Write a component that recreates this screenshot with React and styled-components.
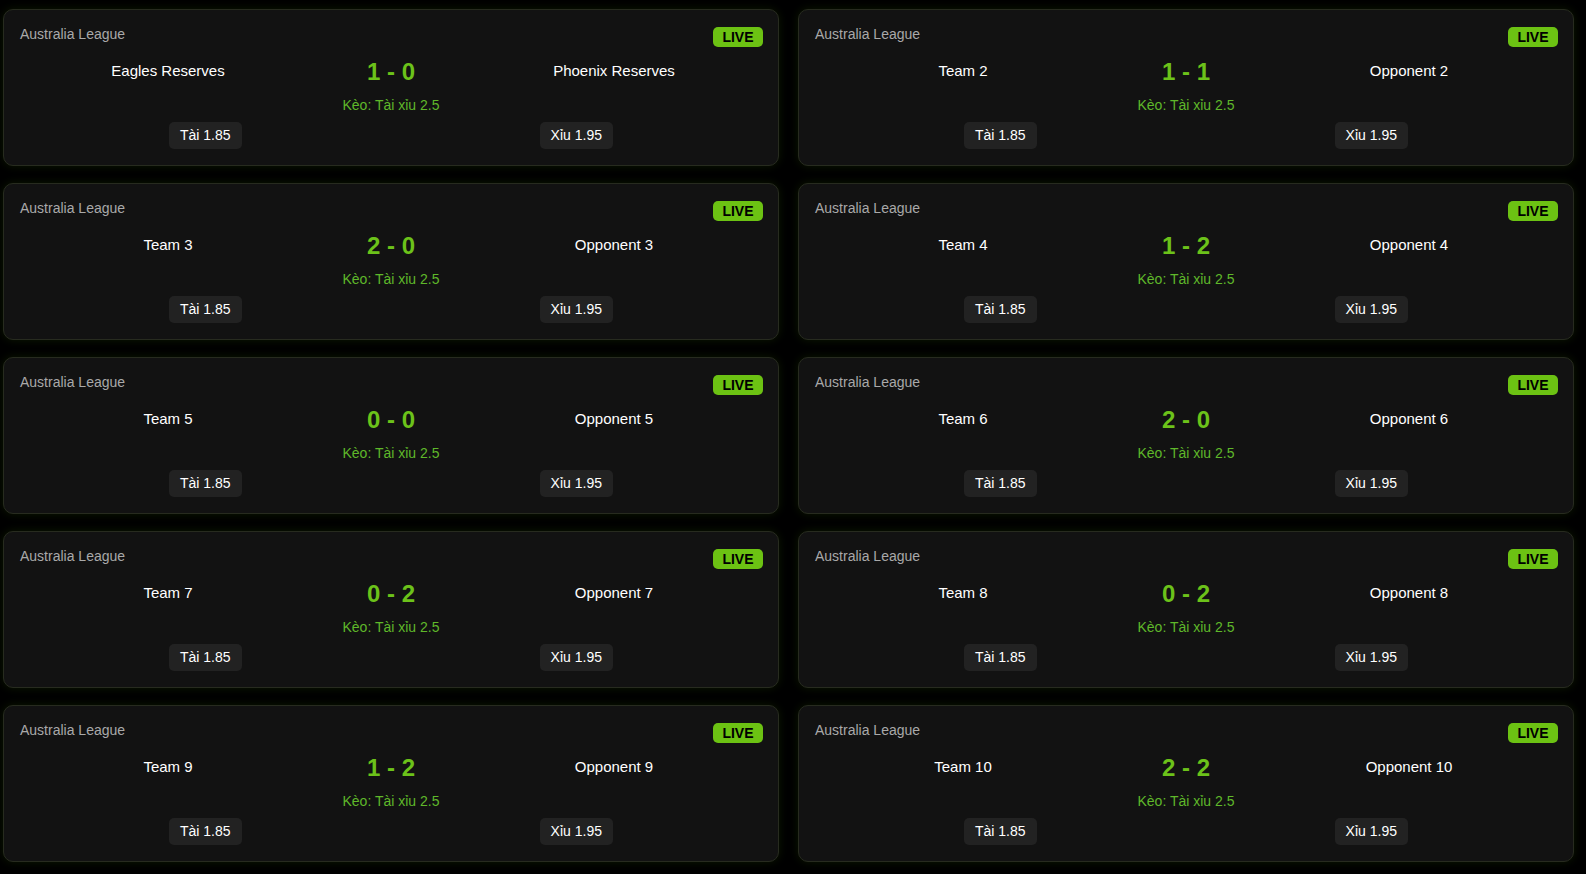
import React from "react";
import styled, { createGlobalStyle } from "styled-components";

const GlobalStyle = createGlobalStyle`
  html, body {
    margin: 0;
    padding: 0;
    background: #000;
    font-family: "Liberation Sans", Arial, sans-serif;
  }
`;

const Board = styled.div`
  display: grid;
  grid-template-columns: 1fr 1fr;
  column-gap: 19px;
  row-gap: 17px;
  padding: 9px 12px 9px 3px;
`;

const Card = styled.div`
  background: #121212;
  border: 1px solid #272b1f;
  border-radius: 10px;
  padding: 16px;
  box-shadow: 0 0 10px rgba(110, 200, 20, 0.12);
`;

const Header = styled.div`
  display: flex;
  justify-content: space-between;
  align-items: flex-start;
  height: 20px;
`;

const League = styled.span`
  color: #a9a9a9;
  font-size: 14px;
  line-height: 16px;
`;

const LiveBadge = styled.span`
  background: #6cc213;
  color: #000;
  font-weight: 700;
  font-size: 14px;
  line-height: 20px;
  height: 20px;
  padding: 0 9.5px;
  border-radius: 5px;
  margin-right: -1px;
  margin-top: 1px;
`;

const Teams = styled.div`
  display: flex;
  align-items: center;
  margin-top: 12px;
`;

const Team = styled.div`
  flex: 1;
  text-align: center;
  color: #fff;
  font-size: 15px;
  line-height: 17px;
  margin-top: -3px;
`;

const Score = styled.div`
  flex: 0 0 150px;
  text-align: center;
  color: #6cc21a;
  font-size: 24px;
  font-weight: 700;
`;

const Market = styled.div`
  margin-top: 11px;
  text-align: center;
  color: #5fb82a;
  font-size: 14px;
  line-height: 16px;
`;

const Odds = styled.div`
  display: flex;
  justify-content: space-around;
  margin-top: 9px;
`;

const OddButton = styled.button`
  background: #222;
  border: none;
  border-radius: 5px;
  color: #fff;
  font-family: inherit;
  font-size: 14px;
  line-height: 17px;
  padding: 5px 11px;
  cursor: pointer;
`;

const matches = [
  { home: "Eagles Reserves", away: "Phoenix Reserves", score: "1 - 0" },
  { home: "Team 2", away: "Opponent 2", score: "1 - 1" },
  { home: "Team 3", away: "Opponent 3", score: "2 - 0" },
  { home: "Team 4", away: "Opponent 4", score: "1 - 2" },
  { home: "Team 5", away: "Opponent 5", score: "0 - 0" },
  { home: "Team 6", away: "Opponent 6", score: "2 - 0" },
  { home: "Team 7", away: "Opponent 7", score: "0 - 2" },
  { home: "Team 8", away: "Opponent 8", score: "0 - 2" },
  { home: "Team 9", away: "Opponent 9", score: "1 - 2" },
  { home: "Team 10", away: "Opponent 10", score: "2 - 2" },
];

const MatchCard = ({ match }) => (
  <Card>
    <Header>
      <League>Australia League</League>
      <LiveBadge>LIVE</LiveBadge>
    </Header>
    <Teams>
      <Team>{match.home}</Team>
      <Score>{match.score}</Score>
      <Team>{match.away}</Team>
    </Teams>
    <Market>Kèo: Tài xỉu 2.5</Market>
    <Odds>
      <OddButton>Tài 1.85</OddButton>
      <OddButton>Xỉu 1.95</OddButton>
    </Odds>
  </Card>
);

const App = () => (
  <>
    <GlobalStyle />
    <Board>
      {matches.map((m) => (
        <MatchCard key={m.home} match={m} />
      ))}
    </Board>
  </>
);

export default App;
